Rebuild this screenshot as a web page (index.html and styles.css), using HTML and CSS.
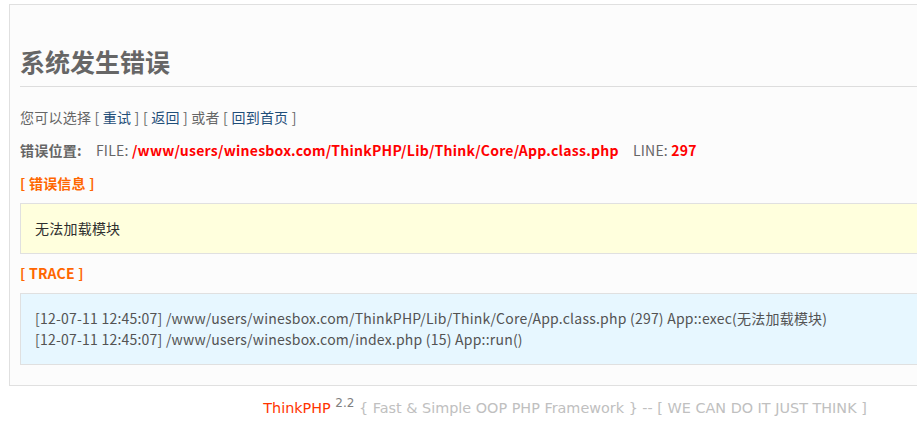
FILE: index.html
```html
<!DOCTYPE html>
<html lang="zh-CN">
<head>
<meta charset="utf-8">
<title>系统发生错误</title>
<link rel="stylesheet" href="styles.css">
</head>
<body>
<div class="page">
  <div class="notice">
    <h2>系统发生错误</h2>
    <div class="choices">您可以选择 [ <a href="#">重试</a> ] [ <a href="#">返回</a> ] 或者 [ <a href="#">回到首页</a> ]</div>
    <p class="location"><strong>错误位置:</strong>　FILE: <span class="red">/www/users/winesbox.com/ThinkPHP/Lib/Think/Core/App.class.php</span>　LINE: <span class="red">297</span></p>
    <p class="title">[ 错误信息 ]</p>
    <p class="message">无法加载模块</p>
    <p class="title">[ TRACE ]</p>
    <p class="trace">[12-07-11 12:45:07] /www/users/winesbox.com/ThinkPHP/Lib/Think/Core/App.class.php (297) App::exec(无法加载模块)<br>[12-07-11 12:45:07] /www/users/winesbox.com/index.php (15) App::run()</p>
  </div>
  <div class="footer">ThinkPHP <sup class="ver">2.2</sup><span class="slogan"> { Fast &amp; Simple OOP PHP Framework } -- [ WE CAN DO IT JUST THINK ]</span></div>
</div>
</body>
</html>
```

FILE: styles.css
```css
html, body {
  margin: 0;
  padding: 0;
  background: #fff;
  overflow-x: hidden;
}

body {
  font-family: "Noto Sans CJK SC", "Noto Sans", sans-serif;
  font-size: 14px;
  color: #333;
}

.page {
  width: 1112px;
  padding: 4px 0 0 9px;
}

.notice {
  padding: 10px;
  color: #666;
  background: #fcfcfc;
  border: 1px solid #e0e0e0;
  line-height: 19px;
  letter-spacing: 0.22px;
}

.notice h2 {
  margin: 20.75px 0;
  padding: 8px 0;
  border-bottom: 1px solid #ddd;
  font-size: 25px;
  line-height: 34px;
  font-weight: bold;
  color: #666;
  letter-spacing: 0;
}

.choices a {
  color: #1f4e79;
  text-decoration: none;
}

.location {
  margin: 14px 0;
}

.location strong {
  font-weight: bold;
}

.red {
  color: #f00;
  font-weight: bold;
  letter-spacing: 0.25px;
}

.title {
  margin: 4px 0;
  color: #f60;
  font-weight: bold;
}

.message,
.trace {
  margin: 10px 0;
  padding: 14px;
  line-height: 21px;
  border: 1px solid #e0e0e0;
}

.message {
  background: #ffd;
  color: #2e2e2e;
}

.trace {
  background: #e7f7ff;
  color: #535353;
}

.footer {
  margin: 10px 0 7px;
  text-align: center;
  color: #ff3300;
  font-family: "DejaVu Sans", Verdana, sans-serif;
  font-size: 14.4px;
}

.ver {
  color: gray;
  font-size: 12px;
}

.slogan {
  color: silver;
}
```
